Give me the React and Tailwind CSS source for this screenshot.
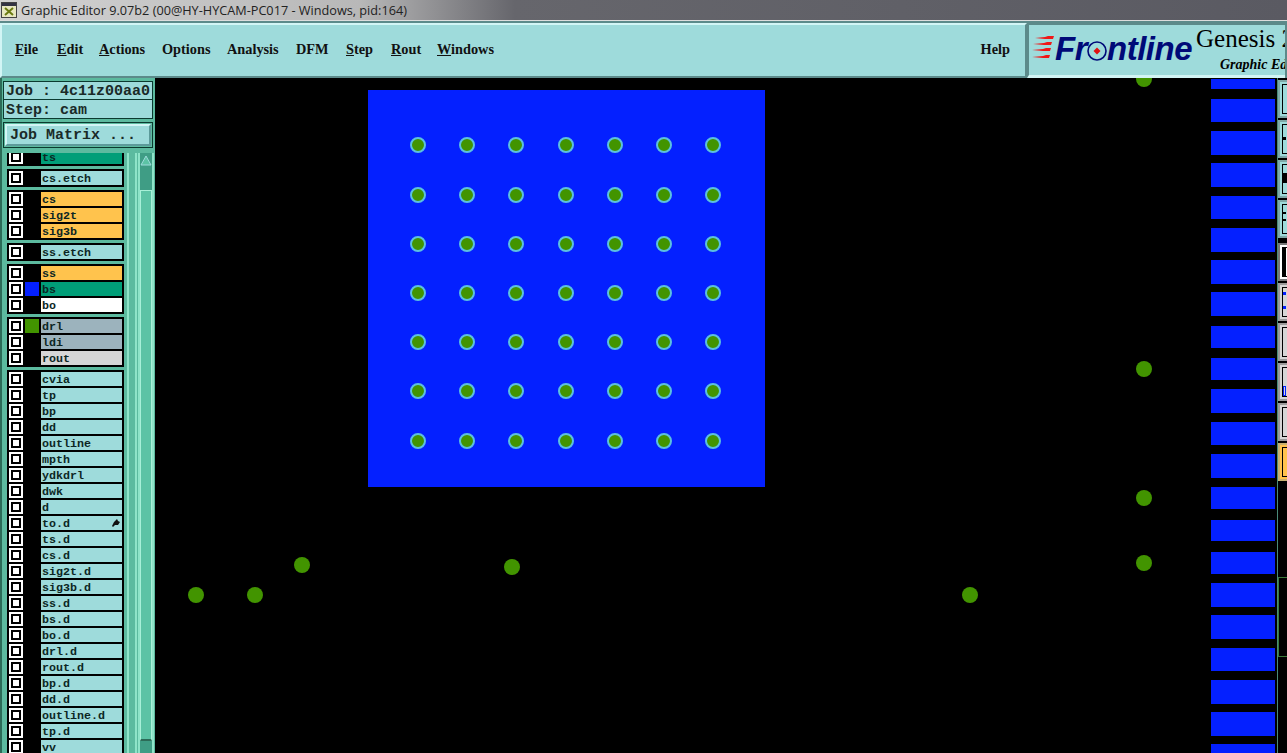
const menus = [
  ["F", "ile", "w-[26px]"],
  ["E", "dit", "w-[26px]"],
  ["A", "ctions", "w-[47px]"],
  ["", "Options", "w-[49px]"],
  ["", "Analysis", "w-[53px]"],
  ["", "DFM", "w-[34px]"],
  ["S", "tep", "w-[29px]"],
  ["R", "out", "w-[30px]"],
  ["W", "indows", "w-[55px]"],
];

const groups = [
  { rows: [{ name: "ts", bg: "bg-[#009e78]" }] },
  { rows: [{ name: "cs.etch" }] },
  {
    rows: [
      { name: "cs", bg: "bg-[#ffc34d]" },
      { name: "sig2t", bg: "bg-[#ffc34d]" },
      { name: "sig3b", bg: "bg-[#ffc34d]" },
    ],
  },
  { rows: [{ name: "ss.etch" }] },
  {
    rows: [
      { name: "ss", bg: "bg-[#ffc34d]" },
      { name: "bs", bg: "bg-[#009e78]", swatch: "bg-[#0420ff]" },
      { name: "bo", bg: "bg-white" },
    ],
  },
  {
    rows: [
      { name: "drl", bg: "bg-[#9cb3bd]", swatch: "bg-[#429400]" },
      { name: "ldi", bg: "bg-[#9cb3bd]" },
      { name: "rout", bg: "bg-[#d6d6d6]" },
    ],
  },
  {
    rows: [
      "cvia", "tp", "bp", "dd", "outline", "mpth", "ydkdrl", "dwk", "d", "to.d", "ts.d", "cs.d",
      "sig2t.d", "sig3b.d", "ss.d", "bs.d", "bo.d", "drl.d", "rout.d", "bp.d", "dd.d", "outline.d", "tp.d", "vv",
    ].map((name) => ({ name })),
  },
];

const pads = [418, 467, 516, 565.5, 614.5, 664, 713];
const padRows = [145, 195, 244, 293, 342, 391, 441];
const loosePads = [
  [1144, 79], [1144, 369], [1144, 498], [1144, 563], [970, 595],
  [512, 567], [302, 565], [255, 595], [196, 595],
];
const stripes = [
  [79, 10], [99, 23], [131, 24], [163, 24], [196, 23], [228, 24], [260, 24], [292, 24], [326, 22],
  [358, 22], [389, 24], [422, 23], [454, 24], [487, 22], [520, 21], [552, 22], [583, 24], [615, 24],
  [648, 23], [680, 24], [712, 24], [744, 10],
];

function Checkbox() {
  return (
    <div className="w-[14px] h-[14px] border-2 border-white bg-black flex items-center justify-center shrink-0">
      <div className="w-[6px] h-[6px] bg-white" />
    </div>
  );
}

function LayerRow({ row }) {
  return (
    <div className="h-[16px] pl-[2px] pr-[2px] flex items-center gap-[2px]">
      <Checkbox />
      <div className={`w-[14px] h-[14px] shrink-0 ${row.swatch || "bg-black"}`} />
      <div className={`relative flex-1 h-[14px] pl-[1px] leading-[14px] ${row.bg || "bg-[#9edbdb]"}`}>
        <span className="font-['Liberation_Mono',monospace] font-bold text-[11.67px] text-[#0c2624]">{row.name}</span>
        {row.name === "to.d" && (
          <svg className="absolute right-[2px] top-[3px]" width="8" height="8" viewBox="0 0 8 8">
            <path d="M0 7 L2 3 L5 0 L6 2 L8 3 L6 6 L3 6 L1 8 Z" fill="#111" />
          </svg>
        )}
      </div>
    </div>
  );
}

function LayerList() {
  return (
    <div className="w-[117px] ml-[2px] shrink-0 flex flex-col gap-[3px] -mt-[5px]">
      {groups.map((group, i) => (
        <div key={i} className="bg-black py-[1px]">
          {group.rows.map((row) => (
            <LayerRow key={row.name} row={row} />
          ))}
        </div>
      ))}
    </div>
  );
}

function Scrollbar() {
  return (
    <>
      <div className="w-[10px] h-full shrink-0 ml-[3px] bg-[#5cba9f] border-x-2 border-[#8fe3c8]" />
      <div className="w-[16px] h-full shrink-0 ml-[1px] bg-[#3f9d85] border-x-2 border-x-[#8fe3c8] flex flex-col items-center">
        <svg className="mt-[2px] shrink-0" width="12" height="11" viewBox="0 0 12 11">
          <path d="M6 1 L11 10 L1 10 Z" fill="#5cc3a5" stroke="#9edbdb" />
        </svg>
        <div className="mt-[24px] w-[12px] h-[551px] shrink-0 bg-[#5cc3a5] border-x border-t border-[#a8f0d8] border-b-2 border-b-[#2c6b58]" />
      </div>
    </>
  );
}

function LeftPanel() {
  return (
    <aside className="w-[155px] h-full shrink-0 bg-[#5cba9f] border-l-[2px] border-[#2c6b58] flex flex-col overflow-hidden font-['Liberation_Mono',monospace] font-bold text-[#1a2a28]">
      <div className="mt-[3px] ml-[1px] w-[150px] h-[19px] border border-[#0b3a30] bg-[#9edbdb] pl-[2px] text-[15px] leading-[20px] whitespace-nowrap">
        Job : 4c11z00aa0
      </div>
      <div className="ml-[1px] w-[150px] h-[19px] border border-t-0 border-[#0b3a30] bg-[#9edbdb] pl-[2px] text-[15px] leading-[21px]">
        Step: cam
      </div>
      <div className="mt-[3px] ml-[1px] w-[150px] h-[26px] border border-[#0b3a30] p-[1px]">
        <div className="h-full bg-[#9edbdb] border-2 border-t-[#d2f5f5] border-l-[#d2f5f5] border-b-[#5c9a9a] border-r-[#5c9a9a] pl-[3px] text-[15px] leading-[19px]">
          Job Matrix ...
        </div>
      </div>
      <div className="mt-[5px] flex-1 flex min-h-0 pl-[3px] overflow-hidden">
        <LayerList />
        <Scrollbar />
      </div>
    </aside>
  );
}

function Logo() {
  return (
    <div className="w-[258px] h-full shrink-0 overflow-hidden relative bg-[#9edbdb] border-t-2 border-l-2 border-[#5c8a8a] border-b-[3px] border-b-[#d2f5f5]">
      <div className="flex items-center h-full pl-[3px] -mt-[2px]">
        <svg width="23" height="24" viewBox="0 0 23 24" className="shrink-0">
          <path d="M3 2 L13 1 L16 0 L22 0 L21 3 L15 3 L13 3 Z M1 8 L12 7 L15 6 L20 6 L19 9 L14 9 L12 9 Z M0 14 L11 13 L14 12 L19 12 L18 15 L13 15 L11 15 Z M0 21 L11 20 L14 19 L18 19 L17 22 L13 22 L11 22 Z" fill="#f01818" />
        </svg>
        <span className="font-['Liberation_Sans',sans-serif] italic font-bold text-[33px] leading-none text-[#000a78] tracking-[-0.5px]">Fr</span>
        <svg width="20" height="20" viewBox="0 0 20 20" className="shrink-0 mt-[5px]">
          <circle cx="10" cy="10" r="9" fill="none" stroke="#000a78" strokeWidth="1.6" />
          <path d="M10 6.5 L13.5 10 L10 13.5 L6.5 10 Z" fill="#e01010" />
        </svg>
        <span className="font-['Liberation_Sans',sans-serif] italic font-bold text-[33px] leading-none text-[#000a78] tracking-[-0.5px]">ntline</span>
      </div>
      <div className="absolute left-[167px] top-[-5px] font-['Liberation_Serif',serif] text-[25px] whitespace-nowrap text-black">Genesis 2000</div>
      <div className="absolute left-[191px] top-[29px] font-['Liberation_Serif',serif] italic font-bold text-[14px] whitespace-nowrap text-black">Graphic Editor</div>
    </div>
  );
}

function ToolButton({ bg, border, children }) {
  return (
    <div className={`h-[38px] shrink-0 border-2 border-r-0 pl-[2px] py-[2px] ${bg} ${border}`}>
      <div className="relative h-full border border-r-0 border-black">{children}</div>
    </div>
  );
}

function ToolColumn() {
  const teal = "bg-[#9edbdb]";
  const tealEdge = "border-[#7fa8a8]";
  const gray = "bg-[#d6d6d6]";
  const grayEdge = "border-[#9a9a9a]";
  return (
    <div className="w-[10px] shrink-0 h-full border-l border-[#4a8a7a] flex flex-col pt-[2px] gap-[2px] bg-black">
      <ToolButton bg={teal} border={tealEdge} />
      <ToolButton bg={teal} border={tealEdge}>
        <div className="absolute left-0 top-[12px] w-[3px] h-[3px] bg-black" />
      </ToolButton>
      <ToolButton bg={teal} border={tealEdge}>
        <div className="absolute left-0 top-[8px] w-[4px] h-[10px] bg-black" />
      </ToolButton>
      <ToolButton bg={teal} border={tealEdge}>
        <div className="absolute left-0 top-[7px] w-[3px] h-[2px] bg-black" />
        <div className="absolute left-0 top-[14px] w-[3px] h-[2px] bg-black" />
      </ToolButton>
      <div className="mt-[3px]">
        <ToolButton bg="bg-white" border="border-[#777]">
          <div className="absolute inset-0 bg-black w-[3px]" />
        </ToolButton>
      </div>
      <ToolButton bg={gray} border={grayEdge}>
        <div className="absolute left-0 top-[4px] w-[3px] h-[3px] bg-[#0420ff]" />
        <div className="absolute left-0 top-[18px] w-[3px] h-[3px] bg-[#0420ff]" />
      </ToolButton>
      <ToolButton bg={gray} border={grayEdge} />
      <ToolButton bg={gray} border={grayEdge}>
        <div className="absolute left-0 top-[18px] w-[3px] h-[10px] border border-[#0420ff]" />
      </ToolButton>
      <ToolButton bg={gray} border={grayEdge} />
      <ToolButton bg="bg-[#ffc34d]" border="border-[#c8b070]" />
      <div className="mt-[94px] h-[80px] border-t border-b border-l border-[#3a7a3a]" />
    </div>
  );
}

export default function App() {
  return (
    <div className="w-[1287px] h-[753px] overflow-hidden flex flex-col bg-black">
      <div className="h-[21px] shrink-0 flex items-center bg-[linear-gradient(90deg,#d2d2d2_0%,#b8b8b8_28%,#66666c_40%,#5a5a62_100%)] border-b border-[#dddddd]">
        <svg className="ml-[1px] shrink-0" width="16" height="16" viewBox="0 0 16 16">
          <rect x="0.5" y="0.5" width="15" height="15" fill="#e8e8c0" stroke="#444" />
          <rect x="1" y="1" width="14" height="3" fill="#334" />
          <path d="M4 6 L12 13 M12 6 L4 13" stroke="#6a7a10" strokeWidth="2" />
        </svg>
        <span className="ml-[4px] mt-[1px] font-['Open_Sans',sans-serif] text-[12.7px] text-[#222] whitespace-nowrap">
          Graphic Editor 9.07b2 (00@HY-HYCAM-PC017 - Windows, pid:164)
        </span>
      </div>

      <div className="h-[57px] shrink-0 flex bg-[#5c8a8a] pt-[2px]">
        <div className="w-[1027px] shrink-0 flex items-center gap-[16px] pl-[13px] pb-[2px] bg-[#9edbdb] border-2 border-t-[#d2f5f5] border-l-[#d2f5f5] border-b-[#5c8a8a] border-r-[#5c8a8a] font-['Liberation_Serif',serif] font-bold text-[14.3px] text-[#111]">
          {menus.map(([first, rest, width]) => (
            <span key={first + rest} className={`${width} whitespace-nowrap`}>
              <span className="underline">{first}</span>
              {rest}
            </span>
          ))}
          <span className="ml-auto mr-[15px]">Help</span>
        </div>
        <Logo />
      </div>

      <div className="flex-1 min-h-0 flex">
        <LeftPanel />
        <main className="relative flex-1 bg-black overflow-hidden">
          <div className="absolute left-[213px] top-[12px] w-[397px] h-[397px] bg-[#0420ff]" />
          {padRows.map((y) =>
            pads.map((x) => (
              <div
                key={`${x}-${y}`}
                className="absolute w-[16px] h-[16px] rounded-full bg-[#429400] border-2 border-[#5cc0e0]"
                style={{ left: x - 155 - 8, top: y - 78 - 8 }}
              />
            ))
          )}
          {stripes.map(([y, h]) => (
            <div
              key={y}
              className="absolute left-[1056px] w-[64px] bg-[#0420ff]"
              style={{ top: y - 78, height: h }}
            />
          ))}
          {loosePads.map(([x, y]) => (
            <div
              key={`${x}-${y}`}
              className="absolute w-[16px] h-[16px] rounded-full bg-[#429400]"
              style={{ left: x - 155 - 8, top: y - 78 - 8 }}
            />
          ))}
        </main>
        <ToolColumn />
      </div>
    </div>
  );
}
